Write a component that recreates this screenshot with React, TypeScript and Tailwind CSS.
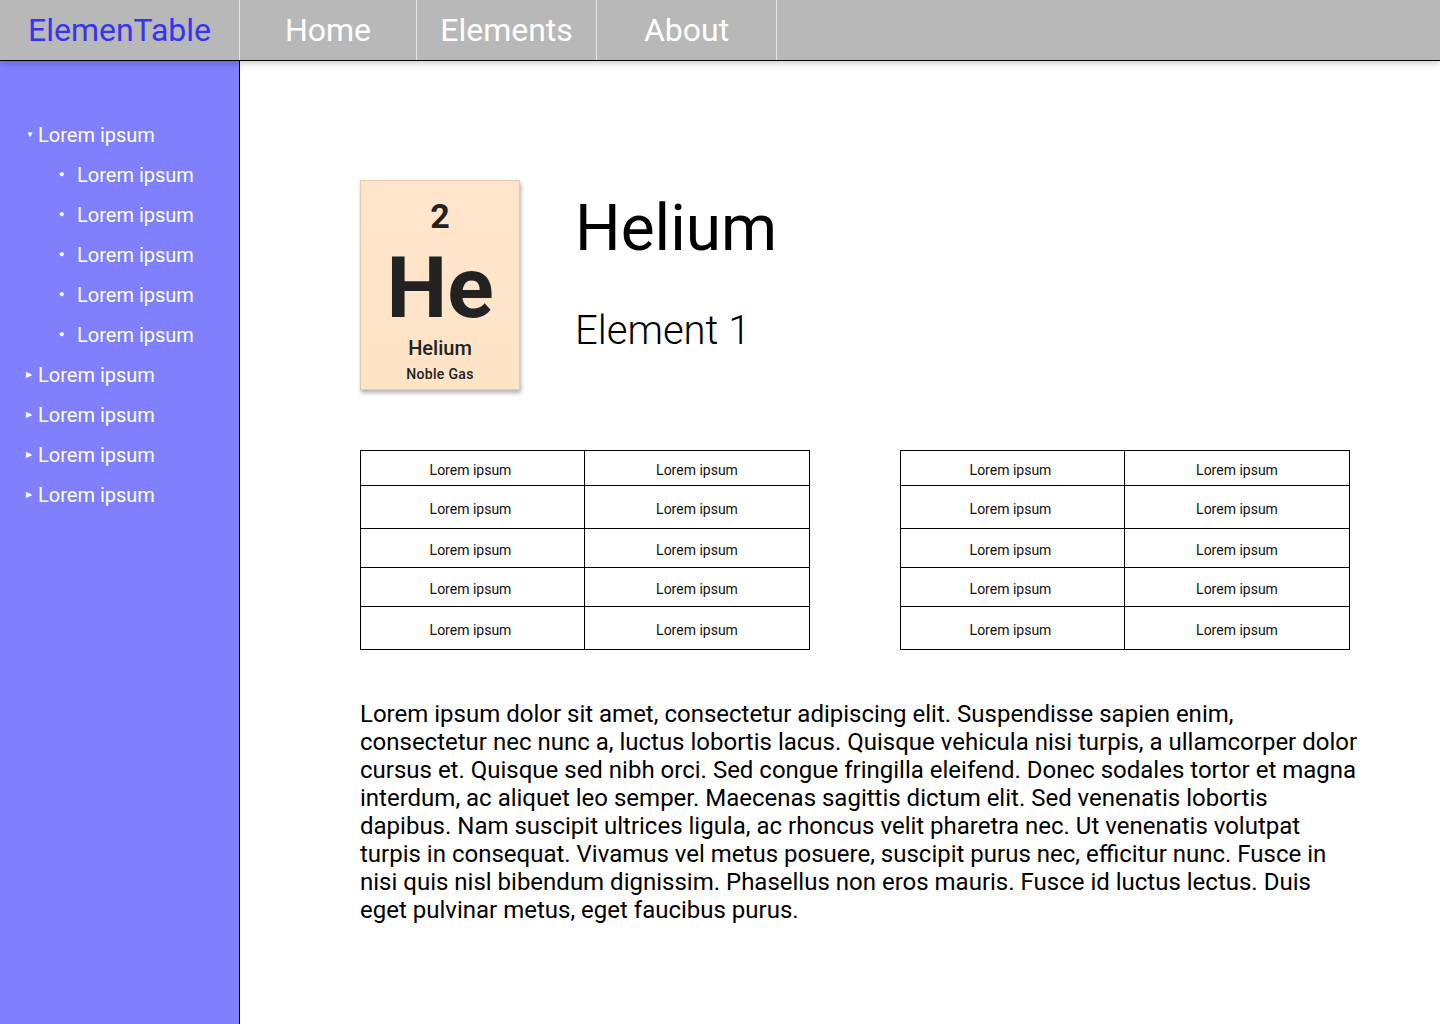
import React from "react";

const font = { fontFamily: "Roboto, 'Noto Sans', sans-serif" };

function Table() {
  const heights = ["h-[34px]", "h-[43px]", "h-[39px]", "h-[39px]", "h-[43px]"];
  return (
    <div className="w-[450px] border border-black">
      {heights.map((h, i) => (
        <div key={i} className={`flex ${h} ${i > 0 ? "border-t border-black" : ""}`}>
          <div className="w-[224px] flex items-center justify-center pt-[5px] pr-[4px] text-[14px] text-[#111] border-r border-black">Lorem ipsum</div>
          <div className="flex-1 flex items-center justify-center pt-[5px] text-[14px] text-[#111]">Lorem ipsum</div>
        </div>
      ))}
    </div>
  );
}

export default function App() {
  const navItems = ["Home", "Elements", "About"];
  return (
    <div className="w-[1440px] h-[1024px] flex flex-col overflow-hidden bg-white" style={font}>
      <header className="h-[61px] flex bg-[#b8b8b8] border-b border-black relative z-10 shadow-[0_3px_6px_rgba(0,0,0,0.18)] shrink-0">
        <div className="w-[240px] flex items-center justify-center border-r border-[#e4e4e4] text-[32px] text-[#3535f0] pb-[1px]">
          ElemenTable
        </div>
        {navItems.map((n, i) => (
          <div
            key={n}
            className={`${i === 0 ? "w-[177px]" : "w-[180px]"} flex items-center justify-center border-r border-[#e4e4e4] text-[32px] text-white pb-[1px]`}
          >
            {n}
          </div>
        ))}
      </header>
      <div className="flex flex-1">
        <aside className="w-[240px] bg-[#8080ff] border-r border-black pt-[54px] shrink-0">
          <ul className="text-white text-[20px]">
            <li className="h-[40px] flex items-center pl-[26px]">
              <span className="text-[8px] w-[12px]">▼</span>
              <span>Lorem ipsum</span>
            </li>
            {[0, 1, 2, 3, 4].map((i) => (
              <li key={i} className="h-[40px] flex items-center pl-[59px]">
                <span className="w-[18px] text-[9px]">●</span>
                <span>Lorem ipsum</span>
              </li>
            ))}
            {[0, 1, 2, 3].map((i) => (
              <li key={i} className="h-[40px] flex items-center pl-[26px]">
                <span className="text-[8px] w-[12px]">▶</span>
                <span>Lorem ipsum</span>
              </li>
            ))}
          </ul>
        </aside>
        <main className="flex-1 pl-[120px] pt-[119px]">
          <div className="flex">
            <div className="w-[160px] h-[210px] border border-[#e6caa6] bg-gradient-to-b from-[#fee6cc] to-[#fee3c6] shadow-[1px_3px_4px_rgba(0,0,0,0.3)] flex flex-col items-center text-[#222]">
              <div className="text-[34px] font-bold leading-[34px] mt-[18px]">2</div>
              <div className="text-[86px] font-bold leading-[64px] mt-[23px]">He</div>
              <div className="text-[20px] font-medium leading-none mt-[18px]">Helium</div>
              <div className="text-[14px] font-medium leading-none mt-[9px] tracking-[0.3px]">Noble Gas</div>
            </div>
            <div className="ml-[55px] flex flex-col">
              <div className="text-[64px] leading-none mt-[17px] text-black">Helium</div>
              <div className="text-[40px] font-light leading-none mt-[50px] text-black">Element 1</div>
            </div>
          </div>
          <div className="flex gap-[90px] mt-[60px]">
            <Table />
            <Table />
          </div>
          <p className="mt-[50px] w-[1000px] text-[24px] leading-[28px] text-black">
            Lorem ipsum dolor sit amet, consectetur adipiscing elit. Suspendisse sapien enim, consectetur nec nunc a, luctus lobortis lacus. Quisque vehicula nisi turpis, a ullamcorper dolor cursus et. Quisque sed nibh orci. Sed congue fringilla eleifend. Donec sodales tortor et magna interdum, ac aliquet leo semper. Maecenas sagittis dictum elit. Sed venenatis lobortis dapibus. Nam suscipit ultrices ligula, ac rhoncus velit pharetra nec. Ut venenatis volutpat turpis in consequat. Vivamus vel metus posuere, suscipit purus nec, efficitur nunc. Fusce in nisi quis nisl bibendum dignissim. Phasellus non eros mauris. Fusce id luctus lectus. Duis eget pulvinar metus, eget faucibus purus.
          </p>
        </main>
      </div>
    </div>
  );
}
